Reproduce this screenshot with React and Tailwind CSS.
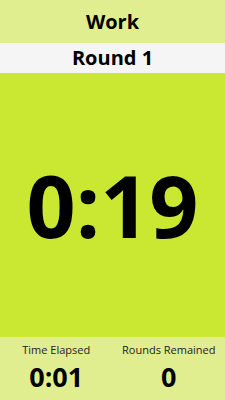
import React from 'react';

const Stat = ({ label, value }) => (
    <div className="flex flex-col items-center">
        <span className="text-[11px] leading-[14px] text-[#222]">{label}</span>
        <span className="mt-[6px] text-[27px] leading-[27px] font-bold text-black">{value}</span>
    </div>
);

const App = () => {
    return (
        <div
            className="h-[400px] w-[225px] flex flex-col overflow-hidden"
            style={{ fontFamily: '"Open Sans", "Noto Sans", sans-serif' }}
        >
            <div className="h-[43px] flex items-center justify-center bg-[#e1ee8f]">
                <h1 className="text-[20px] font-bold text-black">Work</h1>
            </div>
            <div className="h-[30px] flex items-center justify-center bg-[#f5f5f5]">
                <h2 className="text-[20px] font-bold text-black">Round 1</h2>
            </div>
            <div className="flex-1 flex items-center justify-center bg-[#cae731]">
                <span className="text-[86px] font-bold text-black leading-none">0:19</span>
            </div>
            <div className="h-[63px] grid grid-cols-2 pt-[6px] bg-[#e1ee8f]">
                <Stat label="Time Elapsed" value="0:01" />
                <Stat label="Rounds Remained" value="0" />
            </div>
        </div>
    );
};

export default App;
